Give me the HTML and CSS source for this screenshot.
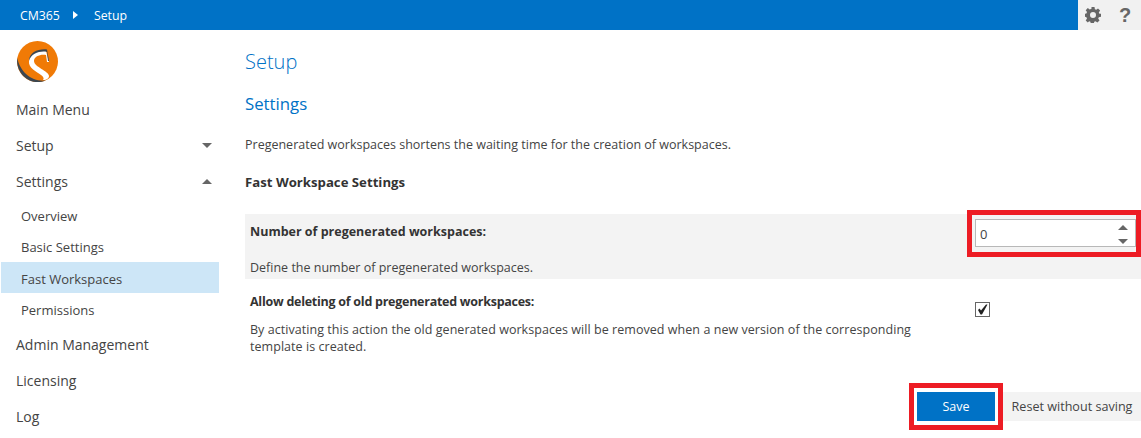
FILE: index.html
```html
<!DOCTYPE html>
<html lang="en">
<head>
<meta charset="utf-8">
<title>Setup</title>
<link rel="stylesheet" href="styles.css">
</head>
<body>
<header class="topbar">
  <nav class="crumbs"><span>CM365</span><svg class="crumb-sep" width="5" height="8" viewBox="0 0 5 8"><path d="M0 0l5 4-5 4z" fill="#fff"/></svg><span>Setup</span></nav>
  <div class="tools">
    <svg width="16" height="16" viewBox="0 0 16 16"><path fill="#666" fill-rule="evenodd" d="M6.500 0h3l.4 2.200 1.300.6L13 1.500l2.100 2.100-1.300 1.900.6 1.300L16 6.800v3l-2.200.4-.6 1.300 1.300 1.900-2.100 2.100-1.900-1.300-1.300.6-.4 2.200h-3l-.4-2.200-1.300-.6L2.800 15.500.7 13.400 2 11.500l-.6-1.300L0 9.800v-3l1.400-.4.600-1.300-1.300-1.900L2.800 1.100l1.900 1.300 1.800-.6zM8 5a3 3 0 1 0 0 6 3 3 0 0 0 0-6z"/></svg>
    <span class="help">?</span>
  </div>
</header>
<div class="layout">
  <aside class="sidebar">
    <svg class="logo" width="41" height="41" viewBox="0 0 41 41">
      <circle cx="20.500" cy="20.500" r="20.500" fill="#f07a06"/>
      <path d="M.3 17C-1.500 30 9 41 20.500 41c3 0 5.500-.5 8-1.500C15 41 3 31 .3 17z" fill="#3c4650"/>
      <path d="M29 10C20 9 13 12 12 20c-1 7 8 11 12 14 3 2 3 4 2 5 4 0 6-2 6-4 0-5-15-9-15-15 0-5 7-7 12-6l1 7h2z" fill="#fff"/>
      <path d="M30 8.500 32 20h-1l-1-9C24 9.500 14 12 12 20 12 11 22 7.500 30 8.500z" fill="#3c4650"/>
    </svg>
    <ul class="nav">
      <li class="nav-item">Main Menu</li>
      <li class="nav-item">Setup<i class="caret caret-down"></i></li>
      <li class="nav-item">Settings<i class="caret caret-up"></i></li>
      <li class="sub-item sub-first">Overview</li>
      <li class="sub-item">Basic Settings</li>
      <li class="sub-item active">Fast Workspaces</li>
      <li class="sub-item">Permissions</li>
      <li class="nav-item nav-after">Admin Management</li>
      <li class="nav-item">Licensing</li>
      <li class="nav-item">Log</li>
    </ul>
  </aside>
  <main class="content">
    <h1>Setup</h1>
    <h2>Settings</h2>
    <p class="intro">Pregenerated workspaces shortens the waiting time for the creation of workspaces.</p>
    <h3>Fast Workspace Settings</h3>
    <section class="row row-shaded">
      <div class="row-top">
        <strong>Number of pregenerated workspaces:</strong>
        <div class="highlight field-highlight">
          <div class="spinner"><span>0</span><span class="arrows"><i class="arr arr-up"></i><i class="arr arr-down"></i></span></div>
        </div>
      </div>
      <p class="desc">Define the number of pregenerated workspaces.</p>
    </section>
    <section class="row row-plain">
      <div class="row-text">
        <strong class="tight">Allow deleting of old pregenerated workspaces:</strong>
        <p class="desc desc-wrap">By activating this action the old generated workspaces will be removed when a new version of the corresponding template is created.</p>
      </div>
      <div class="check"><svg width="11" height="11" viewBox="0 0 11 11"><path d="M1 6l1.500-1.500L4 6.500 9 .5h1.500L5 10.500H3.500z" fill="#222"/></svg></div>
    </section>
    <div class="actions">
      <div class="highlight save-highlight"><button class="save" type="button">Save</button></div>
      <button class="reset" type="button">Reset without saving</button>
    </div>
  </main>
</div>
</body>
</html>
```

FILE: styles.css
```css
* { box-sizing: border-box; }
html, body { margin: 0; height: 438px; overflow: hidden; }
body { font-family: "Open Sans", "Noto Sans", sans-serif; color: #444; background: #fff; }
.topbar { height: 30px; background: #0072c6; display: flex; justify-content: space-between; color: #fff; font-size: 12.300px; }
.crumbs { display: flex; align-items: center; padding-left: 20px; }
.crumb-sep { margin: 0 16px 0 13px; }
.tools { width: 63px; background: #f1f1f1; display: flex; align-items: center; padding-left: 7px; gap: 18px; }
.help { font: bold 20px "Liberation Sans", sans-serif; color: #666; }
.layout { display: flex; }
.sidebar { width: 245px; flex: none; padding: 11px 26px 0 1px; }
.logo { display: block; margin-left: 16px; }
.nav { list-style: none; margin: 10px 0 0; padding: 0; }
.nav-item { height: 36px; line-height: 36px; padding-left: 15px; font-size: 14px; color: #444; position: relative; }
.sub-item { height: 31.250px; line-height: 31px; padding: 2px 0 0 20px; font-size: 13px; color: #444; }
.sub-first { margin-top: -1px; }
.active { background: #cde6f7; }
.nav-after { margin-top: 3px; }
.caret { position: absolute; right: 7px; top: 15px; width: 0; height: 0; border-left: 5px solid transparent; border-right: 5px solid transparent; }
.caret-down { border-top: 5px solid #666; }
.caret-up { border-bottom: 5px solid #666; }
.content { flex: 1; min-width: 0; }
h1 { margin: 17px 0 0; font-size: 20px; line-height: 30px; font-weight: 300; color: #0072c6; }
h2 { margin: 15px 0 0; font-size: 16.800px; line-height: 24px; font-weight: 400; color: #0072c6; }
.intro { margin: 20px 0 0; font-size: 12.500px; line-height: 18px; color: #444; }
h3 { margin: 19px 0 0; font-size: 13.200px; line-height: 18px; font-weight: 700; color: #333; }
.row strong { display: block; font-size: 12.500px; line-height: 18px; font-weight: 700; color: #333; }
.row strong.tight { letter-spacing: -.26px; }
.row-shaded { margin-top: 23px; height: 65px; background: #f3f3f3; padding: 0 5px; }
.row-top { display: flex; justify-content: space-between; align-items: center; height: 36px; }
.desc { margin: 0; font-size: 12.500px; line-height: 17px; color: #444; }
.row-shaded .desc { margin-top: 9px; }
.highlight { border: 5px solid #ed1c24; }
.field-highlight { align-self: flex-start; margin: -4px -5px 0 0; width: 174px; height: 47px; padding: 4px 0 0 3px; flex: none; }
.spinner { height: 28px; border: 1px solid #b8b8b8; background: #fff; display: flex; align-items: center; justify-content: space-between; padding: 2px 7px 0 4px; font-size: 13px; color: #444; }
.arrows { display: flex; flex-direction: column; gap: 9px; margin-top: 1px; }
.arr { display: block; width: 0; height: 0; border-left: 5px solid transparent; border-right: 5px solid transparent; }
.arr-up { border-bottom: 5px solid #666; }
.arr-down { border-top: 5px solid #666; }
.row-plain { display: flex; padding: 14px 5px 0; }
.row-text { width: 680px; }
.desc-wrap { margin-top: 10px; letter-spacing: .05px; }
.check { width: 15px; height: 15px; border: 1px solid #666; margin: 9px 0 0 45px; display: flex; align-items: center; justify-content: center; background: #fff; }
.actions { display: flex; justify-content: flex-end; align-items: center; margin-top: 28px; }
.save-highlight { width: 94px; height: 47px; padding: 4px 3px; }
button { font-family: inherit; border: 0; padding: 0; }
.save { width: 78px; height: 29px; background: #0072c6; color: #fff; font-size: 12.500px; display: block; }
.reset { height: 29px; width: 138px; background: #f3f3f3; color: #444; font-size: 12.600px; }
```
